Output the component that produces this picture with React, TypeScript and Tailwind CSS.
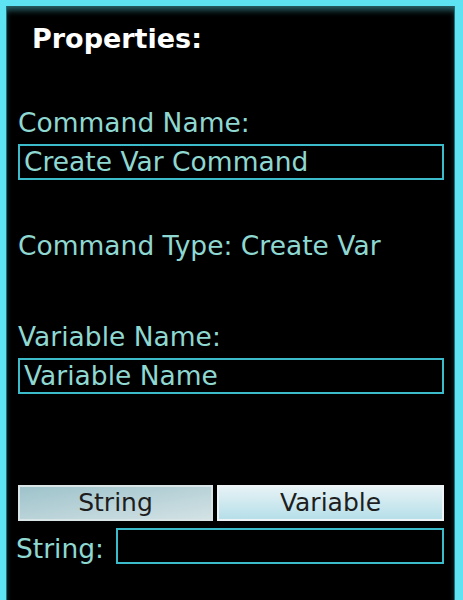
export default function App() {
  return (
    <div
      className="w-[463px] h-[600px] bg-black border-l-[6px] border-t-[6px] border-r-[8px] border-[#5ee3f3] overflow-hidden"
      style={{ fontFamily: '"DejaVu Sans", sans-serif' }}
    >
      <div className="h-full w-full shadow-[inset_0_6px_6px_-2px_rgba(70,170,180,0.6)] border-l border-r border-[#1f6f78] pl-[11px] pr-[10px] text-[#8fd8d2]">
        <div className="pt-[18px] pl-[14px] h-[58px] text-white font-bold text-[27px] leading-[30px]">
          Properties:
        </div>

        <div className="mt-[44px] text-[26.5px] leading-[30px]">Command Name:</div>
        <div className="mt-[6px] h-[36px] border-2 border-[#3cbccb] px-[4px] text-[26.5px] leading-[32px]">
          Create Var Command
        </div>

        <div className="mt-[51px] text-[26.5px] leading-[30px]">Command Type: Create Var</div>

        <div className="mt-[61px] text-[26.5px] leading-[30px]">Variable Name:</div>
        <div className="mt-[6px] h-[36px] border-2 border-[#3cbccb] px-[4px] text-[26.5px] leading-[32px]">
          Variable Name
        </div>

        <div className="mt-[91px] flex gap-[4px] h-[36px] text-[25px] text-[#1e1e1e]">
          <div className="w-[195px] flex items-center justify-center border-2 border-[#d9e4e6] bg-gradient-to-br from-[#9ec3cb] to-[#d3e2e5]">
            String
          </div>
          <div className="flex-1 flex items-center justify-center border-2 border-[#eef4f5] bg-gradient-to-b from-[#e6f2f5] to-[#b6dfe9]">
            Variable
          </div>
        </div>

        <div className="mt-[7px] flex items-center gap-[12px]">
          <span className="text-[26.5px] leading-[30px] -ml-[2px] mt-[6px]">String:</span>
          <div className="flex-1 h-[36px] border-2 border-[#3cbccb]" />
        </div>
      </div>
    </div>
  );
}
